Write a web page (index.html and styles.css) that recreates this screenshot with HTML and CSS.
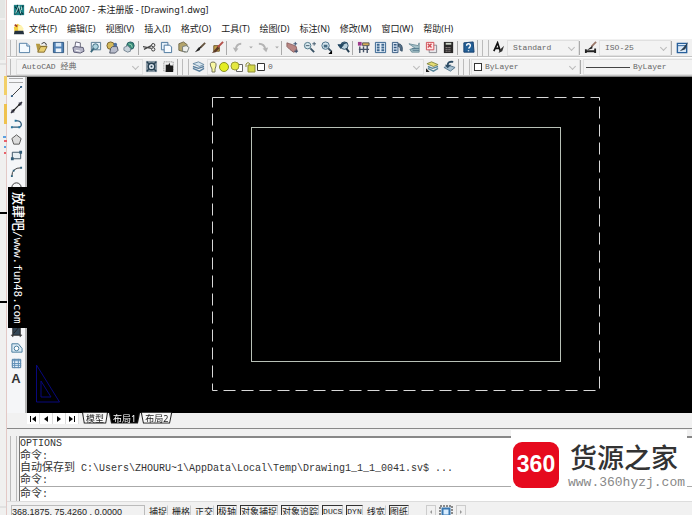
FILE: index.html
```html
<!DOCTYPE html>
<html lang="zh-CN">
<head>
<meta charset="utf-8">
<title>AutoCAD 2007</title>
<link rel="stylesheet" href="styles.css">
</head>
<body>
<div class="desktop">
  <aside class="edge">
    <svg class="edge-art" viewBox="0 0 7 515" preserveAspectRatio="xMinYMin slice" aria-hidden="true">
      <path d="M0 0h5v18H0zM0 20h5v40H0z" fill="#e4e6e4"/>
      <path d="M0 64h7M0 507h7" stroke="#d2d2d2"/>
      <path d="M4 76h3v19H4z" fill="#f2cf68"/><path d="M4 104h3v20H4z" fill="#efc24e"/>
      <path d="M3 137h3M4 147h2" stroke="#5aa0e0" stroke-width="2"/>
      <path d="M4 141h3M4 153h2" stroke="#e8606a" stroke-width="2"/>
      <path d="M0 213h7M0 302h7" stroke="#000" stroke-width="2"/>
    </svg>
  </aside>
  <div class="app">
    <header class="title">
      <svg class="ico" viewBox="0 0 14 14"><path d="M1 1h12v12H1z" fill="#1d8386"/><path d="M2 3l4 4-4 5M12 2L7 8l5 4M5 1l4 12" stroke="#0a3440" fill="none" stroke-width="1.4"/><path d="M3 11l4-9 2 9M10 3v4" stroke="#c9f0e8" fill="none"/></svg>
      <h1>AutoCAD 2007 - 未注册版 - [Drawing1.dwg]</h1>
    </header>
    <nav class="menu">
      <svg class="ico" viewBox="0 0 14 14"><path d="M1 5l4-4 4 2v9H2z" fill="#f3cf3c"/><path d="M6 3h4l2 3v6H6z" fill="#fff3b0"/><path d="M2 9h10l1 4H1z" fill="#24313f"/><path d="M2 2l3 2" stroke="#a43d28" stroke-width="2"/></svg>
      <a href="#">文件(F)</a><a href="#">编辑(E)</a><a href="#">视图(V)</a><a href="#">插入(I)</a><a href="#">格式(O)</a><a href="#">工具(T)</a><a href="#">绘图(D)</a><a href="#">标注(N)</a><a href="#">修改(M)</a><a href="#">窗口(W)</a><a href="#">帮助(H)</a>
    </nav>
    <div class="bar">
      <i class="grip"></i>
      <button aria-label="新建"><svg viewBox="0 0 14 14"><path d="M1.500 2.500h8l3 3v7h-11z" fill="#f4faff" stroke="#4f7ba3"/><path d="M9.500 2.500v3h3" fill="#cfe2f3" stroke="#4f7ba3"/></svg></button>
      <button aria-label="打开"><svg viewBox="0 0 14 14"><path d="M1 3h4l1 2h5v2H5l-2 5z" fill="#b59a42"/><path d="M3 12l3-6h7l-3 6z" fill="#e9cf70" stroke="#80682a"/><path d="M7 3q3-3 5 0v2" fill="none" stroke="#333"/></svg></button>
      <button aria-label="保存"><svg viewBox="0 0 14 14"><path d="M1.500 1.500h11v11h-11z" fill="#4f81b5" stroke="#2c5580"/><path d="M4 2h6v4H4z" fill="#d7e7f5"/><path d="M4 8h6v4H4z" fill="#eef4fa"/></svg></button>
      <i class="sep"></i>
      <button aria-label="打印"><svg viewBox="0 0 14 14"><path d="M4 1l5 1v5H3z" fill="#f7f7ff" stroke="#667"/><path d="M1 7l3-1 8 1 1 4-4 2-7-1z" fill="#b5b5c7" stroke="#565670"/><path d="M4 10l5 1" stroke="#fff"/></svg></button>
      <button aria-label="打印预览"><svg viewBox="0 0 14 14"><path d="M2.500 1.500h10v8h-10z" fill="#e7f1f8" stroke="#557890"/><circle cx="7" cy="6" r="3" fill="#aed3df" stroke="#39687c"/><path d="M5 8l-3 4" stroke="#39687c" stroke-width="2"/></svg></button>
      <button aria-label="发布"><svg viewBox="0 0 14 14"><circle cx="5" cy="5" r="4" fill="#d4b95a" stroke="#775f2a"/><path d="M5 8l2-2h5l1 4-3 3H4z" fill="#b8bccb" stroke="#4d5364"/><circle cx="10" cy="4" r="2" fill="#4b6f9f"/></svg></button>
      <button aria-label="三维发布"><svg viewBox="0 0 14 14"><circle cx="8" cy="5" r="4" fill="#388a79" stroke="#245b61"/><path d="M6 3q4 0 4 4" stroke="#9bd6b7" fill="none"/><path d="M1 7l4-2 3 3v3l-3 1-4-2z" fill="#c7d2da" stroke="#758492"/></svg></button>
      <i class="sep"></i>
      <button aria-label="剪切"><svg viewBox="0 0 14 14"><path d="M0 6l9 2M1 9l8-4" stroke="#444" stroke-width="1.300"/><circle cx="11" cy="4.500" r="1.800" fill="none" stroke="#333"/><circle cx="11" cy="9" r="1.800" fill="none" stroke="#333"/></svg></button>
      <button aria-label="复制"><svg viewBox="0 0 14 14"><path d="M1.500 1.500h7v8h-7z" fill="#e3eef8" stroke="#46729b"/><path d="M4.500 4.500h6l2 2v6h-8z" fill="#f7fbff" stroke="#46729b"/></svg></button>
      <button aria-label="粘贴"><svg viewBox="0 0 14 14"><path d="M2 3l5-2 4 3-2 8-7-2z" fill="#b4a56c" stroke="#736a4c"/><path d="M6 6l4-1 3 2-2 5-5-1z" fill="#eef0ed" stroke="#737b78"/></svg></button>
      <button aria-label="特性匹配"><svg viewBox="0 0 14 14"><path d="M12 2L7 7" stroke="#665540" stroke-width="2"/><path d="M8 6L6 10l-5 2 4-5z" fill="#222"/></svg></button>
      <button aria-label="块编辑器"><svg viewBox="0 0 14 14"><path d="M3 5h6v6H3z" fill="#c5a24a" stroke="#6d542a"/><path d="M13 1L7 7" stroke="#b4504a" stroke-width="2"/><path d="M7 6l-6 7 4-1 4-4z" fill="#5c3926"/></svg></button>
      <i class="sep"></i>
      <button aria-label="放弃"><svg viewBox="0 0 14 14"><path d="M11 3Q6 3 5 9" fill="none" stroke="#b4b4b4" stroke-width="2"/><path d="M2 7l3 5 3-4z" fill="#b4b4b4"/></svg></button>
      <button class="drop" aria-label="放弃列表"><svg viewBox="0 0 8 14"><path d="M2 6h4l-2 2z" fill="#aaa"/></svg></button>
      <button aria-label="重做"><svg viewBox="0 0 14 14"><path d="M2 3q6 0 7 6" fill="none" stroke="#b4b4b4" stroke-width="2"/><path d="M6 8l6-1-2 5z" fill="#b4b4b4"/></svg></button>
      <button class="drop" aria-label="重做列表"><svg viewBox="0 0 8 14"><path d="M2 6h4l-2 2z" fill="#aaa"/></svg></button>
      <i class="sep"></i>
      <button aria-label="实时平移"><svg viewBox="0 0 14 14"><path d="M1 2l3 1 3 1 4 2 1 5-4 1-4-3-3-3z" fill="#b98683" stroke="#8d6362"/><path d="M10 1v4M8 3h4M11 9v4M9 11h4" stroke="#354f70"/></svg></button>
      <button aria-label="实时缩放"><svg viewBox="0 0 14 14"><circle cx="5" cy="5" r="3.500" fill="#d7e8ed" stroke="#4b7285"/><path d="M8 8l4 4" stroke="#365063" stroke-width="2"/><path d="M10 3h4M12 1v4M3 5h4" stroke="#41596b"/></svg></button>
      <button aria-label="窗口缩放"><svg viewBox="0 0 14 14"><circle cx="6" cy="5" r="4" fill="#d6e5ed" stroke="#466d86"/><path d="M4 4h4v3H4z" fill="#456b83"/><path d="M9 8l3 3" stroke="#365063" stroke-width="2"/><path d="M13 10v4H9z"/></svg></button>
      <button aria-label="缩放上一个"><svg viewBox="0 0 14 14"><circle cx="8" cy="5" r="4" fill="#b9d0dc" stroke="#32536b"/><path d="M10 8l3 4" stroke="#233d51" stroke-width="2"/><path d="M11 2Q5 1 4 5M1 4l3 4 3-4z" fill="#244862" stroke="#244862"/></svg></button>
      <i class="sep"></i>
      <button aria-label="特性"><svg viewBox="0 0 14 14"><path d="M1 1h4v4H1z" fill="#9d3a8b"/><path d="M6 2h7v3H6z" fill="#d4ad56" stroke="#555"/><path d="M3 6v7M7 6v6M11 5v8M2 9h11" stroke="#455367" stroke-width="1.500"/></svg></button>
      <button aria-label="设计中心"><svg viewBox="0 0 14 14"><path d="M1.500 1.500h11v11h-11z" fill="#e3edf7" stroke="#315f8b"/><path d="M3 4h3M8 4h3M3 7h3M8 7h3M3 10h3M8 10h3" stroke="#3a668f" stroke-width="2"/></svg></button>
      <button aria-label="工具选项板"><svg viewBox="0 0 14 14"><path d="M1.500 1.500h6v11h-6z" fill="#d4e1f0" stroke="#365a80"/><path d="M3 4h3M3 7h3M3 10h3" stroke="#365a80" stroke-width="1.500"/><path d="M8 3q5 0 4 8l-2-1Q11 6 8 6z" fill="#56718a" stroke="#344d63"/></svg></button>
      <button aria-label="图纸集"><svg viewBox="0 0 14 14"><path d="M1 3l10 2 1-3v10H4l-2-3 6-1z" fill="#a6c2c9" stroke="#70919c"/><path d="M4 8h8M5 10h7" stroke="#52798b"/></svg></button>
      <button aria-label="标记集"><svg viewBox="0 0 14 14"><path d="M4.500 4.500h8v8h-8z" fill="#e7e7eb" stroke="#87878f"/><path d="M1.500 1.500h8v8h-8z" fill="#ffe8e8" stroke="#cf4c54"/><path d="M3 3l4 4M7 3L3 7" stroke="#cf4c54" stroke-width="1.500"/></svg></button>
      <button aria-label="计算器"><svg viewBox="0 0 14 14"><path d="M2 1h10v12H2z" fill="#2a2929"/><path d="M4 3h6" stroke="#cbd4c7" stroke-width="2"/><path d="M4 7h6M4 9h6M4 11h6" stroke="#c7b7b7" stroke-dasharray="1 1"/></svg></button>
      <i class="sep"></i>
      <button aria-label="帮助"><svg viewBox="0 0 14 14"><path d="M2 2l10-1 1 11H2z" fill="#235f96" stroke="#153f6d"/><path d="M5 5q0-2 2-2t2 2q0 1-2 3M7 10v1" fill="none" stroke="#fff" stroke-width="1.500"/></svg></button>
      <i class="grip wide"></i>
      <button aria-label="文字样式"><svg viewBox="0 0 14 14"><path d="M2 11L6 2l3 9M3 8h5" fill="none" stroke="#111" stroke-width="1.800"/><path d="M13 5L9 9l-2 4 4-2z" fill="#333"/></svg></button>
      <span class="combo w-style"><select aria-label="文字样式名"><option>Standard</option></select></span>
      <i class="sep"></i>
      <button aria-label="标注样式"><svg viewBox="0 0 14 14"><path d="M1 11h12M2 9v4M12 8v5" stroke="#222" stroke-width="2"/><path d="M13 1L8 6" stroke="#9a7769" stroke-width="2"/><path d="M9 5l-6 5 6-2z" fill="#222"/></svg></button>
      <span class="combo w-style"><select aria-label="标注样式名"><option>ISO-25</option></select></span>
      <i class="sep"></i>
      <button aria-label="表格样式"><svg viewBox="0 0 14 14"><path d="M1.500 2.500h10v10h-10z" fill="#dceaf8" stroke="#28609b" stroke-width="1.500"/><path d="M2 5h9" stroke="#28609b"/><path d="M13 1L8 7l-4 4 6-2z" fill="#2b3c4c"/></svg></button>
    </div>
    <div class="bar">
      <i class="grip"></i>
      <span class="combo w-space"><select aria-label="工作空间"><option>AutoCAD 经典</option></select></span>
      <button aria-label="工作空间设置"><svg viewBox="0 0 14 14"><path d="M1 1h12v12H1z" fill="#8b9aa5"/><circle cx="7" cy="7" r="3.500" fill="#d8e2ea" stroke="#264052" stroke-width="1.500"/><circle cx="7" cy="7" r="1" fill="#264052"/><path d="M2 2l2 2M12 2l-2 2M2 12l2-2M12 12l-2-2" stroke="#264052" stroke-width="1.500"/></svg></button>
      <button aria-label="我的工作空间"><svg viewBox="0 0 14 14"><path d="M2 2h10v10H2z" fill="none" stroke="#777" stroke-dasharray="1 1"/><path d="M4 5h3l1-2 1 3h3v7H4z" fill="#181818"/></svg></button>
      <i class="grip wide"></i>
      <button aria-label="图层特性"><svg viewBox="0 0 14 14"><path d="M1 4l6-2 6 3-5 2z" fill="#d6e5ef" stroke="#6888a1"/><path d="M1 7l6 2 6-2M1 9l7 3 5-3" fill="none" stroke="#587f9f" stroke-width="1.500"/></svg></button>
      <span class="combo w-layer">
        <select class="layer" aria-label="图层"><option>0</option></select>
        <svg class="layer-icons" viewBox="0 0 60 14" aria-hidden="true"><path d="M4 9Q0 2 5 2q5 0 2 7v3H4z" fill="#f8f7a0" stroke="#77775a"/><circle cx="16" cy="7" r="4.500" fill="#e4ee24" stroke="#899224"/><path d="M28.500 4.500h6v7h-6z" fill="#fff" stroke="#666"/><circle cx="27" cy="6" r="4" fill="#e4e840" stroke="#979b36"/><path d="M38 7V4q2-3 4 0v3" fill="none" stroke="#8c8c38"/><path d="M40 5h7v7h-7z" fill="#d3d747" stroke="#8b8b38"/><path d="M49.500 3.500h7v7h-7z" fill="#fff" stroke="#333"/></svg>
      </span>
      <button aria-label="置为当前图层"><svg viewBox="0 0 14 14"><path d="M1 4l5-2 7 3-5 2z" fill="#e4dc72" stroke="#848846"/><path d="M2 7l5 2 6-2M2 9l6 3 5-3" fill="none" stroke="#578699" stroke-width="1.500"/><path d="M0 9l4 4H0z" fill="#222"/></svg></button>
      <button aria-label="上一个图层"><svg viewBox="0 0 14 14"><path d="M1 8l6-2 6 2-5 4z" fill="#a6bfd0" stroke="#55768c"/><path d="M11 2Q5 1 5 6" fill="none" stroke="#2d4c65" stroke-width="2"/><path d="M2 5l3 4 4-4z" fill="#2d4c65"/></svg></button>
      <i class="grip wide last"></i>
      <span class="combo w-color"><select class="color" aria-label="颜色"><option>ByLayer</option></select><i class="swatch"></i></span>
      <i class="sep"></i>
      <span class="combo w-line"><select class="line" aria-label="线型"><option>ByLayer</option></select><i class="sample"></i></span>
    </div>
    <main class="work">
      <div class="palette">
        <i class="hgrip"></i>
        <button aria-label="直线"><svg viewBox="0 0 14 14"><path d="M2 12L12 2" stroke="#333"/><path d="M1 11h2v2H1zM11 1h2v2h-2z" fill="#2a5c88"/></svg></button>
        <button aria-label="构造线"><svg viewBox="0 0 14 14"><path d="M1 13L13 1" stroke="#222" stroke-width="1.300"/><path d="M3 9h2v2H3zM9 3h2v2H9z" fill="#222"/><path d="M13 1l-4 1 3 3zM1 13l1-4 3 3z" fill="#334"/></svg></button>
        <button aria-label="多段线"><svg viewBox="0 0 14 14"><path d="M2 11h8q3-1 2-4T6 4" fill="none" stroke="#325d7b" stroke-width="1.300"/><path d="M1 10h2v2H1zM9 10h2v2H9zM5 3h2v2H5z" fill="#2877a0"/></svg></button>
        <button aria-label="正多边形"><svg viewBox="0 0 14 14"><path d="M7 2l5 4-2 6H4L2 6z" fill="#dcdcdc" stroke="#555"/></svg></button>
        <button aria-label="矩形"><svg viewBox="0 0 14 14"><path d="M2.500 3.500h9v7h-9z" fill="#e7eef2" stroke="#344d60"/><path d="M1 9h3v3H1zM10 2h3v3h-3z" fill="#315c78"/></svg></button>
        <button aria-label="圆弧"><svg viewBox="0 0 14 14"><path d="M2 12Q2 3 12 3" fill="none" stroke="#333"/><path d="M1 11h2v2H1zM3 5h2v2H3zM11 2h2v2h-2z" fill="#2d6582"/></svg></button>
        <button aria-label="圆"><svg viewBox="0 0 14 14"><circle cx="7" cy="7" r="5" fill="none" stroke="#333"/></svg></button>
        <button aria-label="修订云线"><svg viewBox="0 0 14 14"><path d="M3 9q-3-3 1-4 3-4 6 0 4 1 1 4-4 4-8 0z" fill="none" stroke="#333"/></svg></button>
        <button aria-label="样条曲线"><svg viewBox="0 0 14 14"><path d="M1 10q4-10 6-3t6-3" fill="none" stroke="#333"/></svg></button>
        <button aria-label="椭圆"><svg viewBox="0 0 14 14"><ellipse cx="7" cy="7" rx="6" ry="4" fill="none" stroke="#333"/></svg></button>
        <button aria-label="椭圆弧"><svg viewBox="0 0 14 14"><path d="M7 11Q1 10 1 7t6-4 6 4" fill="none" stroke="#333"/></svg></button>
        <button aria-label="插入块"><svg viewBox="0 0 14 14"><path d="M2 4h6v8H2zM8 7h5" fill="none" stroke="#333"/></svg></button>
        <button aria-label="创建块"><svg viewBox="0 0 14 14"><path d="M2 4h8v8H2zM8 2h4v4" fill="none" stroke="#333"/></svg></button>
        <button aria-label="点"><svg viewBox="0 0 14 14"><path d="M6 6h2v2H6z"/></svg></button>
        <button aria-label="图案填充"><svg viewBox="0 0 14 14"><path d="M2 2h10v10H2zM2 12L12 2" fill="none" stroke="#333"/></svg></button>
        <button aria-label="渐变色"><svg viewBox="0 0 14 14"><path d="M3 2h8v9H3z" fill="#334656"/><path d="M1 11h12M3 1v12M11 1v12M4 9l6-7" stroke="#222"/></svg></button>
        <button aria-label="面域"><svg viewBox="0 0 14 14"><path d="M2 3h7l4 5v4H2z" fill="#dcebf5" stroke="#427899"/><circle cx="7" cy="8" r="2.500" fill="#fff" stroke="#427899"/></svg></button>
        <button aria-label="表格"><svg viewBox="0 0 14 14"><path d="M2.500 2.500h9v9h-9z" fill="#e5f0fa" stroke="#41729b"/><path d="M2 4h10M2 7h10M2 9h10M5 2v10M9 2v10" stroke="#5d8db6"/></svg></button>
        <button class="mtext" aria-label="多行文字">A</button>
        <p class="stamp"><b>放肆吧</b>/www.fun48.com</p>
      </div>
      <div class="view">
        <svg viewBox="0 0 665 335" preserveAspectRatio="xMinYMin meet" role="img" aria-label="布局图纸">
          <rect x="185.500" y="20.500" width="387" height="293" fill="none" stroke="#d8d8d8" stroke-dasharray="12 6"/>
          <rect x="224.500" y="50.500" width="309" height="234" fill="none" stroke="#b8c0b6"/>
          <path d="M9.500 288v37h23zM14 304v16h10z" fill="none" stroke="#08087c"/>
        </svg>
      </div>
    </main>
    <div class="tabs">
      <button class="nav" aria-label="第一个"><svg viewBox="0 0 12 10"><path d="M3 2h1v6H3zM9 2v6L5 5z"/></svg></button>
      <button class="nav" aria-label="上一个"><svg viewBox="0 0 12 10"><path d="M8 2v6L4 5z"/></svg></button>
      <button class="nav" aria-label="下一个"><svg viewBox="0 0 12 10"><path d="M4 2v6l4-3z"/></svg></button>
      <button class="nav" aria-label="最后一个"><svg viewBox="0 0 12 10"><path d="M3 2v6l4-3zM8 2h1v6H8z"/></svg></button>
      <button class="tab">模型</button><button class="tab on">布局1</button><button class="tab">布局2</button>
    </div>
    <section class="command">
      <i class="grip"></i>
      <div class="console">
        <div class="log">
          <p>OPTIONS</p>
          <p><span>命令</span>:</p>
          <p><span>自动保存到</span> C:\Users\ZHOURU~1\AppData\Local\Temp\Drawing1_1_1_0041.sv$ ...</p>
          <p><span>命令</span>:</p>
        </div>
        <div class="prompt"><label for="cmd"><span>命令</span>:</label><input id="cmd" type="text"></div>
      </div>
      <div class="brand">
        <div class="badge">360</div>
        <div class="brand-text"><strong>货源之家</strong><small>www.360hyzj.com</small></div>
      </div>
    </section>
    <footer class="status">
      <output class="coords">368.1875, 75.4260 , 0.0000</output>
      <button>捕捉</button><button>栅格</button><button>正交</button><button class="on">极轴</button><button class="on">对象捕捉</button><button class="on">对象追踪</button><button class="on latin">DUCS</button><button class="on latin">DYN</button><button>线宽</button><button class="on">图纸</button>
      <div class="pager">
        <button aria-label="上一布局"><svg viewBox="0 0 8 10"><path d="M5 3v4L3 5z" fill="#999"/></svg></button>
        <button class="sheet" aria-label="最大化视口"><svg viewBox="0 0 14 14"><path d="M1 1h12v12H1z" fill="none" stroke="#222" stroke-dasharray="2 1"/><path d="M3.500 3.500h7v7h-7z" fill="#d9edff" stroke="#3978b2" stroke-width="2"/></svg></button>
        <button aria-label="下一布局"><svg viewBox="0 0 8 10"><path d="M3 3v4l2-2z" fill="#999"/></svg></button>
      </div>
    </footer>
  </div>
</div>
</body>
</html>
```
FILE: styles.css
```css
* { box-sizing: border-box; }
body {
  margin: 0;
  font: 9px/12px "Noto Sans", "Noto Sans CJK SC", sans-serif;
  color: #222;
  background: #f0f0f0;
}
button, select, input { font: inherit; color: inherit; }
button { padding: 0; border: 0; background: none; }
p, h1 { margin: 0; }
svg { display: block; }
i { flex: none; }

.desktop { display: flex; height: 100vh; overflow: hidden; }
.edge { flex: none; width: 7px; background: #f0f0ef; border-right: 1px solid #e3c9c6; }
.edge-art { width: 7px; height: 100%; }
.app { flex: 1; min-width: 0; display: flex; flex-direction: column; }

.title, .menu { flex: none; display: flex; align-items: center; background: #fff; padding-left: 6px; }
.title { height: 20px; gap: 4px; }
.title h1 { font-size: 9px; font-weight: 400; white-space: nowrap; }
.menu { height: 18px; gap: 10px; white-space: nowrap; }
.menu .ico { margin-right: -6px; }
.menu a { color: inherit; text-decoration: none; }
.ico { flex: none; width: 12px; height: 12px; }

.bar {
  flex: none;
  display: flex;
  align-items: center;
  height: 19px;
  background: #f1f1f1;
  border-top: 1px solid #fff;
  border-bottom: 1px solid #c4c4c4;
  overflow: hidden;
}
.bar button { flex: none; width: 17px; height: 17px; display: grid; place-items: center; }
.bar button svg { width: 13px; height: 13px; }
.bar button.drop { width: 9px; }
.bar button.drop svg { width: 8px; }
.sep { width: 3px; height: 14px; border-left: 1px solid #aaa; }
.grip { width: 9px; height: 16px; position: relative; }
.grip::before {
  content: "";
  display: block;
  height: 100%;
  width: 5px;
  margin-left: 3px;
  border: solid #bbb;
  border-width: 0 1px;
}
.grip.wide { width: 13px; border-left: 1px solid #aaa; }
.grip.wide::before { margin-left: 4px; }

.combo { position: relative; flex: none; display: block; height: 16px; }
.combo select {
  appearance: none;
  display: block;
  width: 100%;
  height: 16px;
  padding: 0 14px 0 5px;
  border: 1px solid #e0e0e0;
  border-radius: 0;
  background: #f3f3f3;
  color: #666;
  font: 8px/14px "Liberation Mono", "Noto Sans CJK SC", monospace;
}
.combo::after {
  content: "";
  position: absolute;
  right: 5px;
  top: 5px;
  width: 4px;
  height: 4px;
  border: solid #bbb;
  border-width: 0 1px 1px 0;
  transform: rotate(45deg);
}
.w-style { width: 72px; }
.w-space { width: 127px; }
.w-layer { width: 217px; }
.w-color { width: 109px; }
.w-line { width: 120px; flex: 1 0 auto; }
.combo .layer { padding-left: 60px; }
.combo .color { padding-left: 13px; }
.combo .line { padding-left: 49px; }
.layer-icons { position: absolute; left: 1px; top: 1px; width: 60px; height: 14px; }
.swatch { position: absolute; left: 3px; top: 4px; width: 8px; height: 8px; border: 1px solid #333; background: #fff; }
.sample { position: absolute; left: 3px; top: 8px; width: 44px; border-top: 1px solid #444; }

.work { flex: 1; min-height: 0; display: flex; border-top: 1px solid #888; }
.palette {
  position: relative;
  flex: none;
  width: 20px;
  background: #f5f6f8;
  border-right: 2px solid #b5b5b5;
}
.hgrip { display: block; height: 5px; margin: 1px 2px 0; border: solid #aaa; border-width: 1px 0; }
.palette button { display: grid; place-items: center; width: 18px; height: 16px; }
.palette button svg { width: 13px; height: 13px; }
.palette .mtext { font: bold 13px/16px "Liberation Sans", sans-serif; color: #333; }
.stamp {
  position: absolute;
  left: 1px;
  top: 110px;
  width: 20px;
  height: 141px;
  background: #000;
  color: #fff;
  writing-mode: vertical-rl;
  text-orientation: sideways;
  white-space: nowrap;
  text-align: center;
  font: 11px/20px "DejaVu Sans Mono", "Noto Sans CJK SC", monospace;
}
.stamp b { font-size: 13px; font-weight: 500; }
.view { flex: 1; min-width: 0; background: #000; overflow: hidden; }
.view svg { width: 100%; height: 100%; }

.tabs {
  flex: none;
  display: flex;
  align-items: flex-start;
  height: 16px;
  padding-left: 20px;
  background: #f1f1f1;
  border-bottom: 1px solid #888;
}
.nav { width: 13px; height: 11px; background: #fff; border-right: 1px solid #ddd; }
.nav svg { width: 12px; height: 10px; }
.tab { position: relative; z-index: 0; height: 11px; line-height: 11px; padding: 0 4px; margin-left: 1px; }
.nav + .tab { margin-left: 3px; }
.tab::before {
  content: "";
  position: absolute;
  inset: 0 1px;
  z-index: -1;
  background: #f8f8f8;
  border: solid #222;
  border-width: 0 1px 1px;
  transform: perspective(20px) rotateX(-16deg);
}
.tab.on { color: #fff; }
.tab.on::before { background: #000; }

.command { position: relative; flex: none; display: flex; padding-top: 7px; background: #f1f1f1; }
.command .grip { width: 12px; height: auto; }
.console {
  flex: 1;
  min-width: 0;
  background: #fff;
  border-top: 2px solid #888;
  border-left: 1px solid #777;
  font: 10px/12px "Liberation Mono", "Noto Sans CJK SC", monospace;
  color: #333;
}
.console span { font-size: 11px; }
.log { height: 48px; white-space: nowrap; }
.log p { height: 12px; }
.prompt { display: flex; height: 15px; align-items: center; border-top: 1px solid #aaa; }
.prompt input { flex: 1; min-width: 0; height: 12px; padding: 0; border: 0; outline: 0; background: none; }
.brand {
  position: absolute;
  right: 5px;
  top: 1px;
  width: 176px;
  height: 69px;
  display: flex;
  align-items: center;
  gap: 9px;
  padding-left: 2px;
  background: #fff;
}
.badge {
  flex: none;
  width: 46px;
  height: 46px;
  border-radius: 9px;
  background: #e60a1e;
  color: #fff;
  text-align: center;
  font: bold 23px/45px "Liberation Sans", sans-serif;
}
.brand-text { display: flex; flex-direction: column; white-space: nowrap; }
.brand-text strong { font: 500 27px/36px "Noto Sans CJK SC", sans-serif; color: #333; margin-left: 2px; }
.brand-text small { font: 13px/16px "Liberation Mono", monospace; color: #888; }

.status {
  flex: none;
  display: flex;
  height: 14px;
  padding: 3px 0 0 4px;
  gap: 3px;
  overflow: hidden;
  background: #f1f1f1;
  border-top: 1px solid #ddd;
  white-space: nowrap;
  font-family: "Liberation Sans", "Noto Sans CJK SC", sans-serif;
}
.coords { width: 134px; border: 1px solid #bbb; line-height: 12px; height: 14px; }
.status button { flex: none; height: 14px; line-height: 12px; border: 1px solid transparent; border-right-color: #ccc; }
.status .on { border-color: #333 #ccc #333 #333; }
.status .latin { font: 8px/12px "Liberation Mono", monospace; }
.pager { display: flex; gap: 3px; margin-left: 14px; }
.status .pager button { width: 10px; border-color: #ccc; padding: 0; }
.pager svg { width: 8px; height: 10px; }
.status .pager .sheet { width: 14px; border: 0; }
.pager .sheet svg { width: 14px; height: 14px; }
```
